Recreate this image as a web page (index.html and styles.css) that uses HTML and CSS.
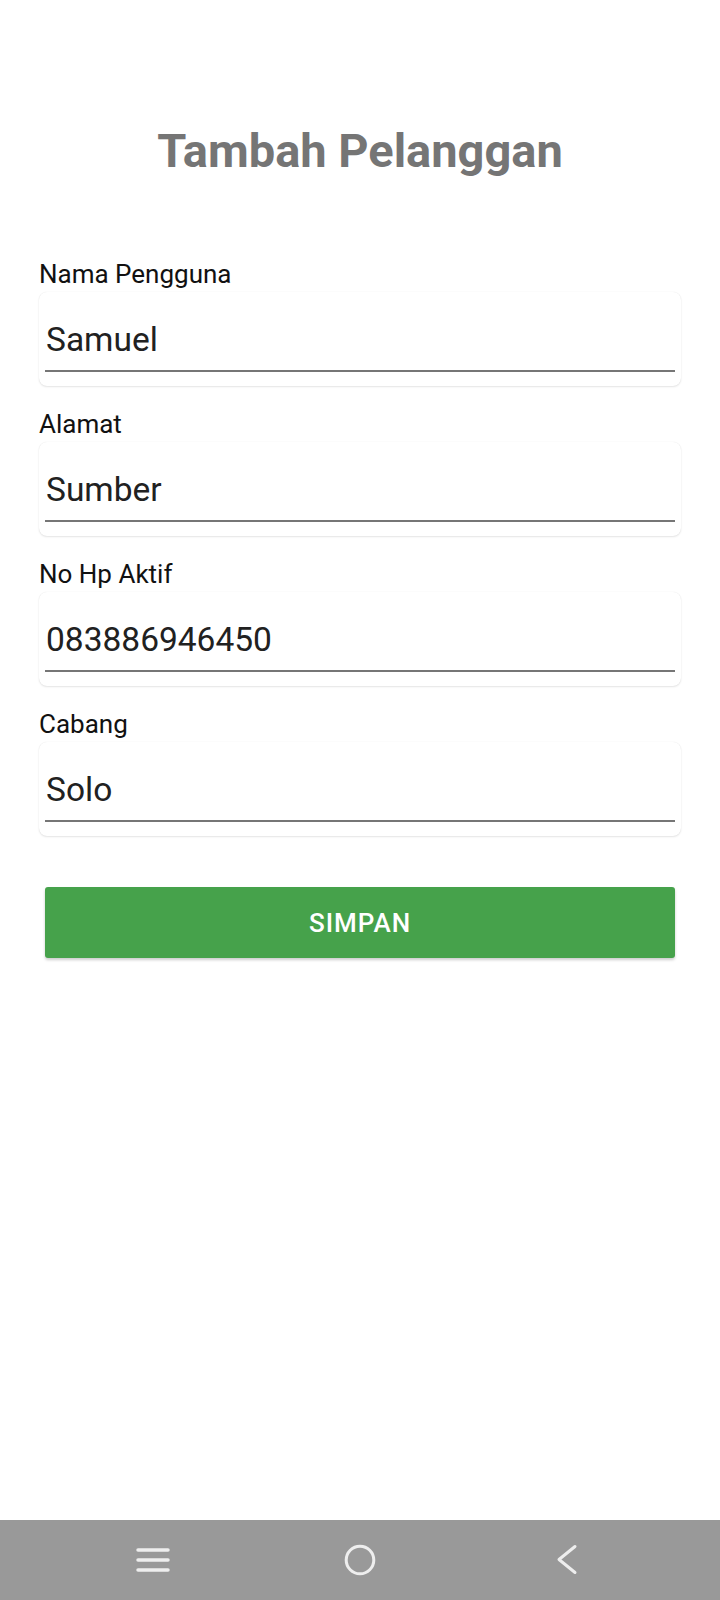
FILE: index.html
```html
<!DOCTYPE html>
<html lang="id">
<head>
<meta charset="utf-8">
<title>Tambah Pelanggan</title>
<link rel="stylesheet" href="styles.css">
</head>
<body>
<div class="screen">
  <main class="content">
    <h1 class="title">Tambah Pelanggan</h1>
    <div class="form">
      <div class="field">
        <div class="label">Nama Pengguna</div>
        <div class="card"><div class="input">Samuel</div></div>
      </div>
      <div class="field">
        <div class="label">Alamat</div>
        <div class="card"><div class="input">Sumber</div></div>
      </div>
      <div class="field">
        <div class="label">No Hp Aktif</div>
        <div class="card"><div class="input">083886946450</div></div>
      </div>
      <div class="field">
        <div class="label">Cabang</div>
        <div class="card"><div class="input">Solo</div></div>
      </div>
    </div>
    <button class="save">SIMPAN</button>
  </main>
  <nav class="navbar">
    <div class="nav-btn">
      <svg width="48" height="48" viewBox="0 0 48 48"><g stroke="#eeeeee" stroke-width="3.5" stroke-linecap="round"><line x1="9" y1="14" x2="39" y2="14"/><line x1="9" y1="24" x2="39" y2="24"/><line x1="9" y1="34" x2="39" y2="34"/></g></svg>
    </div>
    <div class="nav-btn">
      <svg width="48" height="48" viewBox="0 0 48 48"><circle cx="24" cy="24" r="13.8" fill="none" stroke="#eeeeee" stroke-width="3"/></svg>
    </div>
    <div class="nav-btn">
      <svg width="48" height="48" viewBox="0 0 48 48"><polyline points="32,10.5 16,23.5 32,36.5" fill="none" stroke="#eeeeee" stroke-width="3" stroke-linecap="round" stroke-linejoin="round"/></svg>
    </div>
  </nav>
</div>
</body>
</html>
```
FILE: styles.css
```css
html, body {
  margin: 0;
  padding: 0;
  background: #ffffff;
}
body {
  font-family: Roboto, "Noto Sans", "Liberation Sans", sans-serif;
}
.screen {
  width: 720px;
  height: 1600px;
  display: flex;
  flex-direction: column;
}
.content {
  flex: 1;
  display: flex;
  flex-direction: column;
}
.title {
  margin: 124px 0 0 0;
  font-size: 47px;
  line-height: 54px;
  font-weight: 700;
  color: #757575;
  text-align: center;
}
.form {
  margin-top: 82px;
  display: flex;
  flex-direction: column;
  gap: 24px;
}
.field {
  display: flex;
  flex-direction: column;
  gap: 4px;
}
.label {
  margin-left: 39px;
  font-size: 26px;
  line-height: 28px;
  color: #111111;
}
.card {
  margin: 0 39px;
  height: 94px;
  box-sizing: border-box;
  padding: 0 6px;
  background: #ffffff;
  border-radius: 8px;
  box-shadow: 0 1px 2px rgba(0, 0, 0, 0.10), 0 0 1px rgba(0, 0, 0, 0.10);
}
.input {
  padding-top: 28px;
  padding-left: 1px;
  padding-bottom: 10px;
  font-size: 33.5px;
  line-height: 40px;
  color: #212121;
  border-bottom: 2px solid #767676;
}
.save {
  margin: 51px 45px 0 45px;
  height: 71px;
  border: none;
  border-radius: 3px;
  background: #46a24b;
  color: #ffffff;
  font-family: Roboto, "Noto Sans", "Liberation Sans", sans-serif;
  font-size: 26px;
  font-weight: 500;
  letter-spacing: 1px;
  box-shadow: 0 2px 3px rgba(0, 0, 0, 0.2);
}
.navbar {
  height: 80px;
  background: #999999;
  display: flex;
  justify-content: center;
  align-items: center;
  gap: 159px;
}
.nav-btn {
  width: 48px;
  height: 48px;
}
.nav-btn svg {
  display: block;
}
```
